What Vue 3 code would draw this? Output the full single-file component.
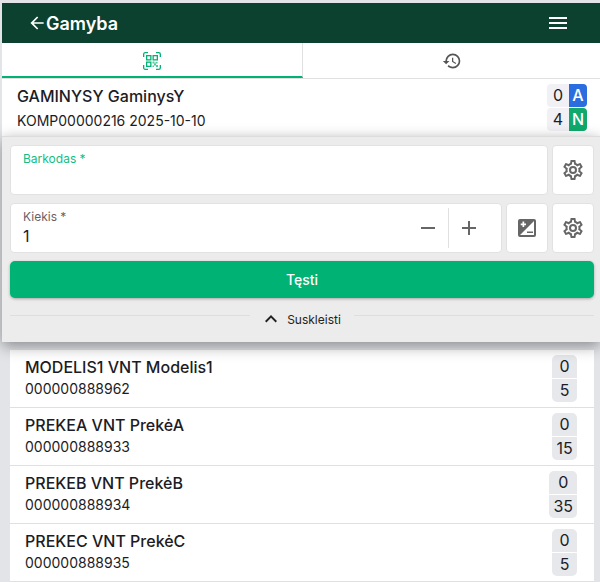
<script setup>
const items = [
  { title: 'MODELIS1 VNT Modelis1', code: '000000888962', a: '0', b: '5' },
  { title: 'PREKEA VNT PrekėA', code: '000000888933', a: '0', b: '15' },
  { title: 'PREKEB VNT PrekėB', code: '000000888934', a: '0', b: '35' },
  { title: 'PREKEC VNT PrekėC', code: '000000888935', a: '0', b: '5' },
]
const cog = 'M12,8A4,4 0 0,1 16,12A4,4 0 0,1 12,16A4,4 0 0,1 8,12A4,4 0 0,1 12,8M12,10A2,2 0 0,0 10,12A2,2 0 0,0 12,14A2,2 0 0,0 14,12A2,2 0 0,0 12,10M10,22C9.75,22 9.54,21.82 9.5,21.58L9.13,18.93C8.5,18.68 7.96,18.34 7.44,17.94L4.95,18.95C4.73,19.03 4.46,18.95 4.34,18.73L2.34,15.27C2.21,15.05 2.27,14.78 2.46,14.63L4.57,12.97L4.5,12L4.57,11L2.46,9.37C2.27,9.22 2.21,8.95 2.34,8.73L4.34,5.27C4.46,5.05 4.73,4.96 4.95,5.05L7.44,6.05C7.96,5.66 8.5,5.32 9.13,5.07L9.5,2.42C9.54,2.18 9.75,2 10,2H14C14.25,2 14.46,2.18 14.5,2.42L14.87,5.07C15.5,5.32 16.04,5.66 16.56,6.05L19.05,5.05C19.27,4.96 19.54,5.05 19.66,5.27L21.66,8.73C21.79,8.95 21.73,9.22 21.54,9.37L19.43,11L19.5,12L19.43,13L21.54,14.63C21.73,14.78 21.79,15.05 21.66,15.27L19.66,18.73C19.54,18.95 19.27,19.04 19.05,18.95L16.56,17.95C16.04,18.34 15.5,18.68 14.87,18.93L14.5,21.58C14.46,21.82 14.25,22 14,22H10M11.25,4L10.88,6.61C9.68,6.86 8.62,7.5 7.85,8.39L5.44,7.35L4.69,8.65L6.8,10.2C6.4,11.37 6.4,12.64 6.8,13.8L4.68,15.36L5.43,16.66L7.86,15.62C8.63,16.5 9.68,17.14 10.87,17.38L11.24,20H12.76L13.13,17.39C14.32,17.14 15.37,16.5 16.14,15.62L18.57,16.66L19.32,15.36L17.2,13.81C17.6,12.64 17.6,11.37 17.2,10.2L19.31,8.65L18.56,7.35L16.15,8.39C15.38,7.5 14.32,6.86 13.12,6.62L12.75,4H11.25Z'
</script>

<template>
  <div class="page">
    <header class="topbar">
      <div class="brand">
        <svg class="back" viewBox="0 0 24 24"><path d="M20,11V13H8L13.5,18.5L12.08,19.92L4.16,12L12.08,4.08L13.5,5.5L8,11H20Z" /></svg>
        <span>Gamyba</span>
      </div>
      <svg class="menu" viewBox="0 0 24 24"><path d="M3,6H21V8H3V6M3,11H21V13H3V11M3,16H21V18H3V16Z" /></svg>
    </header>

    <nav class="tabs">
      <div class="tab active">
        <svg class="scan" viewBox="0 0 18 18">
          <g fill="none" stroke="currentColor" stroke-width="1.3">
            <path d="M.65 5V2.200A1.550 1.550 0 0 1 2.200 .65H5M13 .65h2.800A1.550 1.550 0 0 1 17.350 2.200V5M17.350 13v2.800a1.550 1.550 0 0 1-1.550 1.550H13M5 17.350H2.200A1.550 1.550 0 0 1 .65 15.800V13" />
            <rect x="3.650" y="3.650" width="4.200" height="4.200" />
            <rect x="10.150" y="3.650" width="4.200" height="4.200" />
            <rect x="3.650" y="10.150" width="4.200" height="4.200" />
          </g>
          <path opacity=".7" d="M9.500 9.500h2v2h-2zM12.500 10h2v1.500h-2zM11 11.500h2v2h-2zM13 13h2v2h-2zM9.500 13.500h1.500v1.500H9.500z" />
        </svg>
      </div>
      <div class="tab">
        <svg class="history" viewBox="0 0 24 24"><path d="M13.5,8H12V13L16.28,15.54L17,14.33L13.5,12.25V8M13,3A9,9 0 0,0 4,12H1L4.96,16.03L9,12H6A7,7 0 0,1 13,5A7,7 0 0,1 20,12A7,7 0 0,1 13,19C11.07,19 9.32,18.21 8.06,16.94L6.64,18.36C8.27,20 10.5,21 13,21A9,9 0 0,0 22,12A9,9 0 0,0 13,3" /></svg>
      </div>
    </nav>

    <section class="info">
      <div class="info-text">
        <div class="info-title">GAMINYSY GaminysY</div>
        <div class="info-sub">KOMP00000216 2025-10-10</div>
      </div>
      <div class="badges">
        <div class="badge-row"><span class="count">0</span><span class="letter blue">A</span></div>
        <div class="badge-row"><span class="count">4</span><span class="letter green">N</span></div>
      </div>
    </section>

    <section class="panel">
      <div class="field-row">
        <div class="field grow">
          <label class="focus">Barkodas *</label>
        </div>
        <button class="square"><svg viewBox="0 0 24 24"><path :d="cog" /></svg></button>
      </div>
      <div class="field-row">
        <div class="field grow qty">
          <div class="qty-main">
            <label>Kiekis *</label>
            <div class="value">1</div>
          </div>
          <button class="step"><svg viewBox="0 0 24 24"><path d="M19,13H5V11H19V13Z" /></svg></button>
          <span class="divider"></span>
          <button class="step"><svg viewBox="0 0 24 24"><path d="M19,13H13V19H11V13H5V11H11V5H13V11H19V13Z" /></svg></button>
        </div>
        <button class="square"><svg viewBox="0 0 24 24"><path fill-rule="evenodd" d="M5,3H19A2,2 0 0,1 21,5V19A2,2 0 0,1 19,21H5A2,2 0 0,1 3,19V5A2,2 0 0,1 5,3M5,19H19V5ZM7.500,5.500V7.500H5.700V9.200H7.500V11H9.200V9.200H11V7.500H9.200V5.500ZM12,15.500V17H18V15.500Z" /></svg></button>
        <button class="square"><svg viewBox="0 0 24 24"><path :d="cog" /></svg></button>
      </div>
      <button class="submit">Tęsti</button>
      <div class="collapse">
        <span class="line"></span>
        <div class="collapse-label">
          <svg viewBox="0 0 24 24"><path d="M7.41,15.41L12,10.83L16.59,15.41L18,14L12,8L6,14L7.41,15.41Z" /></svg>
          <span>Suskleisti</span>
        </div>
        <span class="line"></span>
      </div>
    </section>

    <section class="list">
      <div v-for="item in items" :key="item.code" class="row">
        <div class="row-text">
          <div class="row-title">{{ item.title }}</div>
          <div class="row-code">{{ item.code }}</div>
        </div>
        <div class="stack">
          <span>{{ item.a }}</span>
          <span>{{ item.b }}</span>
        </div>
      </div>
    </section>
  </div>
</template>

<style>
html, body { margin: 0; background: #e2e4e8; }
</style>

<style scoped>
.page {
  width: 600px;
  height: 582px;
  overflow: hidden;
  box-sizing: border-box;
  padding: 3px 0 0 2px;
  background: #e2e4e8;
  font-family: Inter, "Liberation Sans", sans-serif;
  color: #1c1c24;
}
svg { display: block; fill: currentColor; }
button { border: 0; padding: 0; background: none; font: inherit; color: inherit; }

.topbar {
  height: 40px;
  background: #0c4130;
  color: #fff;
  display: flex;
  align-items: center;
  justify-content: space-between;
  padding: 0 30px 0 25px;
}
.brand { display: flex; align-items: center; font-size: 18px; font-weight: 600; }
.brand span { margin-left: -1px; }
.back { width: 20px; height: 20px; }
.menu { width: 24px; height: 24px; }

.tabs { display: flex; height: 35px; background: #fff; border-bottom: 1px solid #e0e0e0; }
.tab { flex: 1; display: flex; align-items: center; justify-content: center; box-sizing: border-box; }
.tab.active { flex: none; width: 301px; height: 35px; border-bottom: 2px solid #00b274; border-right: 1px solid #e0e0e0; padding-top: 2px; }
.scan { width: 18px; height: 18px; color: #00b274; }
.history { width: 20px; height: 20px; color: #555; }

.info {
  height: 57px;
  background: #fff;
  display: flex;
  align-items: center;
  justify-content: space-between;
  padding: 0 13px 0 15px;
  box-sizing: border-box;
}
.info-title { font-size: 16px; font-weight: 500; line-height: 24px; }
.info-sub { font-size: 14px; line-height: 22px; margin-top: 2px; }
.badges { display: flex; flex-direction: column; gap: 1px; }
.badge-row { display: flex; height: 23px; font-size: 16px; line-height: 23px; text-align: center; }
.count { width: 22px; background: #f1f1f5; border-radius: 4px 0 0 4px; }
.letter { width: 18px; color: #fff; font-weight: 500; border-radius: 0 4px 4px 0; }
.blue { background: #2b6cdf; }
.green { background: #10a96b; }

.panel {
  position: relative;
  z-index: 1;
  height: 206px;
  box-sizing: border-box;
  padding: 8px 6px 0 8px;
  background: #ececec;
  border-top: 1px solid #dcdcdc;
  box-shadow: 0 4px 14px rgba(0, 0, 0, 0.4);
  display: flex;
  flex-direction: column;
}
.field-row { display: flex; gap: 4px; height: 50px; margin-bottom: 8px; }
.field {
  background: #fff;
  border: 1px solid #e2e2e2;
  border-radius: 4px;
  box-sizing: border-box;
}
.grow { flex: 1; min-width: 0; padding: 5px 12px; }
label { display: block; font-size: 12px; line-height: 16px; color: #6b5f66; }
label.focus { color: #12bd85; }
.qty { display: flex; align-items: center; padding: 0 12px 0 12px; }
.qty-main { flex: 1; }
.value { font-size: 16px; line-height: 22px; }
.step { width: 40px; height: 40px; display: flex; align-items: center; justify-content: center; color: #666; }
.step svg { width: 24px; height: 24px; }
.divider { width: 1px; height: 40px; background: #e0e0e0; }
.square {
  width: 42px;
  height: 50px;
  flex: none;
  background: #fff;
  border: 1px solid #e2e2e2;
  border-radius: 4px;
  box-sizing: border-box;
  display: flex;
  align-items: center;
  justify-content: center;
  color: #666;
}
.square svg { width: 24px; height: 24px; }
.submit {
  height: 37px;
  flex: none;
  background: #00b274;
  color: #fff;
  border-radius: 5px;
  font-size: 14px;
  font-weight: 500;
  box-shadow: 0 1px 3px rgba(0, 0, 0, 0.3);
}
.collapse { display: flex; align-items: flex-start; margin-top: 11px; }
.line { flex: 1; height: 1px; margin-top: 6px; background: #dedede; }
.collapse-label { display: flex; align-items: center; gap: 4px; padding: 0 13px 0 9px; font-size: 12px; color: #222; height: 20px; }
.collapse-label svg { width: 24px; height: 24px; flex: none; }

.list {
  margin: 8px 6px 0 8px;
  background: #fff;
}
.row {
  height: 58px;
  display: flex;
  align-items: center;
  justify-content: space-between;
  padding: 0 17px 0 15px;
  box-sizing: border-box;
  border-bottom: 1px solid #e0e0e0;
}
.row-text { margin-bottom: 4px; }
.row-title { font-size: 16px; font-weight: 500; line-height: 24px; }
.row-code { font-size: 14px; line-height: 20px; }
.stack { display: flex; flex-direction: column; gap: 1px; border-radius: 5px; overflow: hidden; min-width: 25px; font-size: 16px; line-height: 23px; text-align: center; }
.stack span { background: #e6e8ec; padding: 0 4px; }
</style>
